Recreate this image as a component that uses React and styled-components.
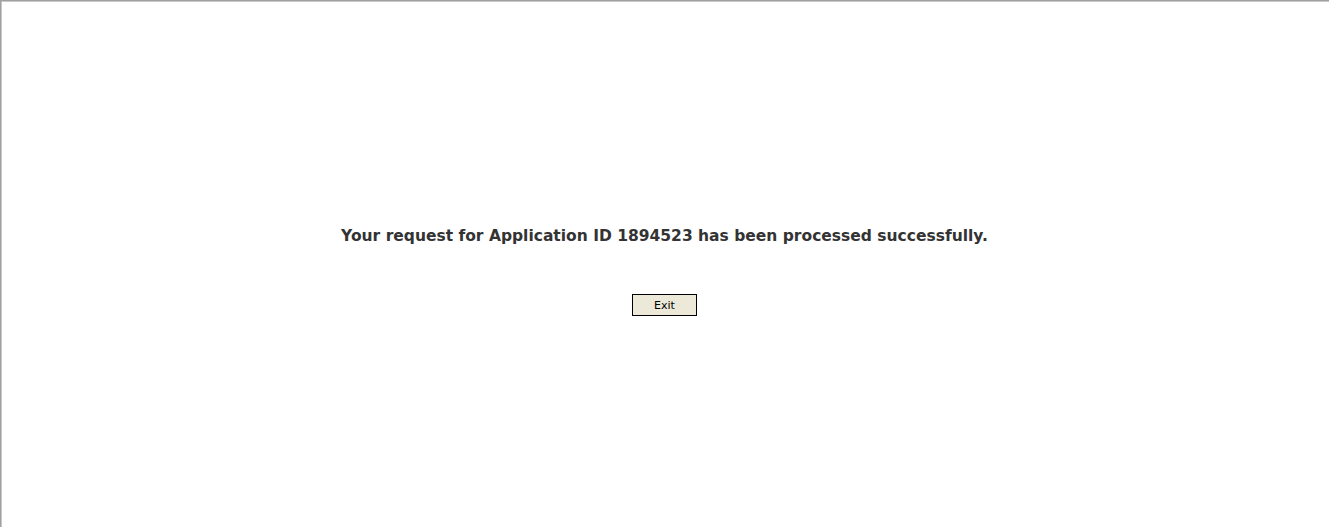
import React from 'react';
import styled, { createGlobalStyle } from 'styled-components';

const GlobalStyle = createGlobalStyle`
    html, body {
        margin: 0;
        padding: 0;
        background: #fff;
    }
`;

const Frame = styled.div`
    box-sizing: border-box;
    width: 1329px;
    height: 527px;
    border-top: 1px solid #a0a0a0;
    border-left: 1px solid #a0a0a0;
    box-shadow: inset 1px 1px 0 #c8c8c8;
    display: flex;
    flex-direction: column;
    align-items: center;
    padding-top: 223px;
    padding-right: 1px;
`;

const Message = styled.div`
    font-family: "DejaVu Sans", Verdana, sans-serif;
    font-weight: bold;
    font-size: 15.5px;
    color: #333333;
    line-height: 24px;
`;

const Button = styled.button`
    margin-top: 46px;
    width: 65px;
    height: 22px;
    box-sizing: border-box;
    border: 1px solid #000;
    background: #ece9d8;
    font-family: Tahoma, "DejaVu Sans", sans-serif;
    font-size: 11px;
    color: #000;
    padding: 0;
    cursor: pointer;
`;

export default function App() {
    return (
        <>
            <GlobalStyle />
            <Frame>
                <Message>Your request for Application ID 1894523 has been processed successfully.</Message>
                <Button>Exit</Button>
            </Frame>
        </>
    );
}
